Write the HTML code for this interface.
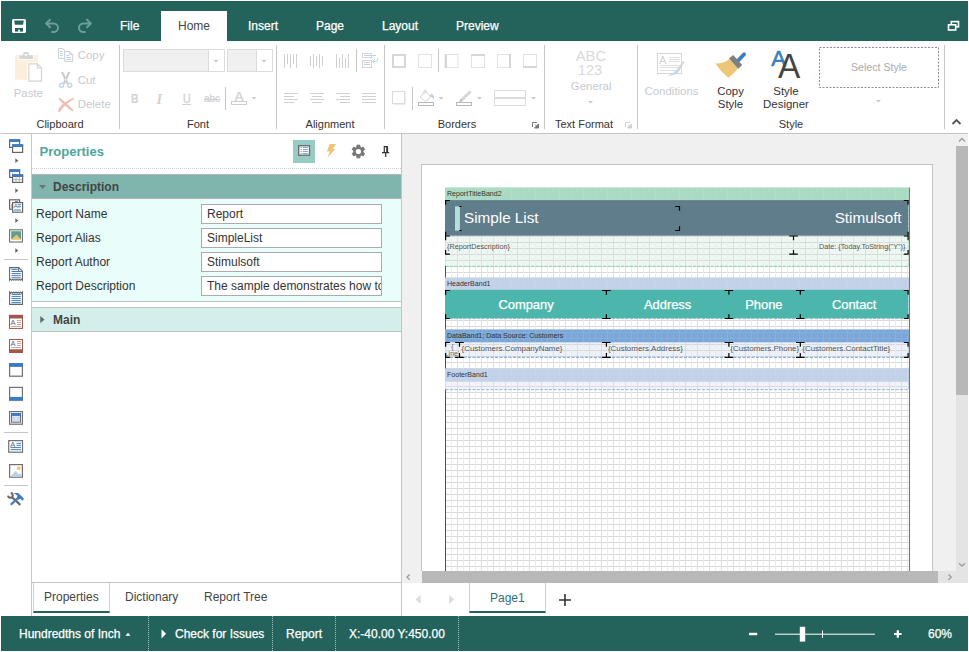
<!DOCTYPE html>
<html>
<head>
<meta charset="utf-8">
<title>Designer</title>
<style>
html,body{margin:0;padding:0;background:#fff;}
body{width:969px;height:652px;overflow:hidden;position:relative;font-family:"Liberation Sans",Arial,sans-serif;font-size:12px;color:#444;}
.a{position:absolute;}
.t{position:absolute;white-space:nowrap;line-height:14px;}
#top{left:1px;top:1px;width:967px;height:40px;background:#24635b;}
.tab{position:absolute;top:18px;-webkit-text-stroke:.25px currentColor;color:#fff;font-size:12px;line-height:14px;white-space:nowrap;}
#hometab{left:160px;top:10px;width:66px;height:30px;background:#fff;}
#ribbon{left:1px;top:41px;width:967px;height:92px;background:#fff;border-bottom:1px solid #c6c6c6;}
.vsep{position:absolute;width:1px;background:#c6c6c6;}
.gl{position:absolute;top:118px;font-size:11px;line-height:13px;color:#333;white-space:nowrap;transform:translateX(-50%);}
.dis{color:#c9c9d0;}
.s11{font-size:11.45px;line-height:13px;}
#status{left:1px;top:616px;width:967px;height:35px;background:#24635b;color:#fff;}
.st{position:absolute;top:11px;-webkit-text-stroke:.25px #fff;color:#fff;font-size:12px;line-height:14px;white-space:nowrap;}
.dsep{position:absolute;top:0;height:35px;width:0;border-left:1px dotted #9fc3be;}
svg{position:absolute;overflow:visible;}
.bh{font-size:7.050px;line-height:8px;color:#333;}
.ct{font-size:7.950px;line-height:9px;color:#555;}
.hd{top:296.500px;font-size:12.900px;line-height:15px;color:#fff;-webkit-text-stroke:.25px #fff;transform:translateX(-50%);}
.grid{background-image:linear-gradient(to right,#dedede 1px,transparent 1px),linear-gradient(to right,transparent 6px,#ececec 6px,#ececec 7px,transparent 7px),linear-gradient(to bottom,#d9d9d9 1px,transparent 1px);background-size:12px 6px,12px 6px,6px 6px;}
.inp{left:201px;width:179px;height:18px;border:1px solid #ababab;background:#fff;color:#333;font-size:12px;line-height:18px;padding-left:5px;box-sizing:content-box;width:174px;overflow:hidden;white-space:nowrap;}
</style>
</head>
<body>
<!-- TOP BAR -->
<div class="a" id="top">
  <div class="a" id="hometab"></div>
</div>
<div class="tab" style="left:120px;top:19px">File</div>
<div class="tab" style="left:178px;top:19px;color:#444;-webkit-text-stroke:0">Home</div>
<div class="tab" style="left:248px;top:19px">Insert</div>
<div class="tab" style="left:316px;top:19px">Page</div>
<div class="tab" style="left:382px;top:19px">Layout</div>
<div class="tab" style="left:456px;top:19px">Preview</div>

<!-- RIBBON -->
<div class="a" id="ribbon"></div>
<div class="vsep" style="left:119px;top:45px;height:84px"></div>
<div class="vsep" style="left:276px;top:45px;height:84px"></div>
<div class="vsep" style="left:384px;top:45px;height:84px"></div>
<div class="vsep" style="left:544px;top:45px;height:84px"></div>
<div class="vsep" style="left:637px;top:45px;height:84px"></div>
<div class="vsep" style="left:944px;top:45px;height:84px"></div>
<div class="gl" style="left:60px">Clipboard</div>
<div class="gl" style="left:198px">Font</div>
<div class="gl" style="left:330px">Alignment</div>
<div class="gl" style="left:457px">Borders</div>
<div class="gl" style="left:584px">Text Format</div>
<div class="gl" style="left:791px">Style</div>


<!-- ribbon texts -->
<div class="t s11 dis" style="left:13.700px;top:87px">Paste</div>
<div class="t s11 dis" style="left:77.700px;top:49px">Copy</div>
<div class="t s11 dis" style="left:77.700px;top:74px">Cut</div>
<div class="t s11 dis" style="left:77.700px;top:98px">Delete</div>
<div class="t s11 dis" style="left:570.800px;top:80px">General</div>
<div class="t s11 dis" style="left:644.500px;top:85px">Conditions</div>
<div class="t s11" style="left:730.500px;top:85px;color:#333;text-align:center;transform:translateX(-50%)">Copy<br>Style</div>
<div class="t s11" style="left:786px;top:85px;color:#333;text-align:center;transform:translateX(-50%)">Style<br>Designer</div>
<div class="t" style="left:851px;top:60.500px;color:#aaa;font-size:10.600px;line-height:13px">Select Style</div>
<div class="t dis" style="left:575.200px;top:48.500px;font-size:15.500px;line-height:14.200px;transform:scaleX(.95);text-align:center;width:30px;color:#d9d9d9;white-space:normal">ABC<br>123</div>
<svg width="122" height="42" viewBox="818 46 122 42" style="left:818px;top:46px"><rect x="819.500" y="47.500" width="119" height="40" fill="none" stroke="#8c8c8c" stroke-width="1" stroke-dasharray="2 1.500"/></svg>
<!-- font combos -->
<div class="a" style="left:123px;top:49px;width:100px;height:21px;border:1px solid #dcdcdc;background:#fff"><div class="a" style="left:0;top:0;width:84px;height:21px;background:#f0f0f0;border-right:1px solid #dcdcdc"></div></div>
<div class="a" style="left:227px;top:49px;width:44px;height:21px;border:1px solid #dcdcdc;background:#fff"><div class="a" style="left:0;top:0;width:28px;height:21px;background:#f0f0f0;border-right:1px solid #dcdcdc"></div></div>
<div class="t" style="left:130.500px;top:92px;font-weight:bold;font-size:13px;color:#d2d2d2;transform:scaleX(.8);transform-origin:0 0">B</div>
<div class="t" style="left:156.500px;top:92px;font-style:italic;font-family:'Liberation Serif',serif;font-weight:bold;font-size:14.500px;color:#d2d2d2">I</div>
<div class="t" style="left:183px;top:92px;font-size:13px;color:#d2d2d2;-webkit-text-stroke:.4px #d2d2d2;transform:scaleX(.82);transform-origin:0 0">U</div><div class="a" style="left:182px;top:104px;width:9px;height:1px;background:#d2d2d2"></div>
<div class="t" style="left:204px;top:92px;font-size:10px;text-decoration:line-through;color:#cfcfcf;-webkit-text-stroke:.2px #cfcfcf">abc</div>
<div class="t" style="left:234.300px;top:90px;font-size:13.400px;font-weight:bold;color:#d4d4d4">A</div>
<div class="vsep" style="left:225px;top:87px;height:23px"></div>
<div class="vsep" style="left:356px;top:49px;height:23px"></div>
<div class="vsep" style="left:438px;top:49px;height:23px"></div>
<div class="vsep" style="left:412px;top:87px;height:23px"></div>

<svg width="969" height="652" viewBox="0 0 969 652" style="left:0;top:0;pointer-events:none">
<!-- top icons -->
<g>
 <rect x="12" y="19" width="14" height="14" rx="1.5" fill="#fff"/>
 <path d="M14.2 20.5h9.6l-.7 4.3h-8.2z" fill="#24635b"/>
 <rect x="15" y="28" width="8" height="3.6" fill="#24635b"/>
 <rect x="18.2" y="29.6" width="1.7" height="2.2" fill="#fff"/>
</g>
<g fill="none" stroke="#6a9f98" stroke-width="2" stroke-linecap="round" stroke-linejoin="round">
 <path d="M50 19.8l-3.8 3.7 3.8 3.7"/><path d="M46.5 23.5h7.2a4.3 4.3 0 0 1 0 8.6h-1.6"/>
 <path d="M87 19.8l3.8 3.7-3.8 3.7"/><path d="M90.5 23.5h-7.2a4.3 4.3 0 0 0 0 8.6h1.6"/>
</g>
<g fill="none" stroke="#fff" stroke-width="1.6">
 <rect x="951.3" y="21.6" width="7.2" height="5.2"/>
 <rect x="948.5" y="24.8" width="7.2" height="5.2" fill="#24635b"/>
</g>
<!-- paste -->
<g>
 <rect x="15" y="55" width="22.800" height="24.700" fill="#fbeedb"/>
 <path d="M19.100 58.900v-3.600h4v-1.800a1.500 1.500 0 0 1 1.500-1.500h2.800a1.500 1.500 0 0 1 1.500 1.500v1.800h4v3.600z" fill="#d6d6d6" stroke="#fff" stroke-width="1.600" paint-order="stroke"/>
 <rect x="24.900" y="53.900" width="2.200" height="1.800" fill="#fff"/>
 <rect x="27" y="62.300" width="15.500" height="20" fill="#fff"/>
 <path d="M28.800 63.800h8.500l4.200 4.200v13.200h-12.700z" fill="#fff" stroke="#d4d4d4" stroke-width="1.200"/>
 <path d="M37.300 63.800v4.200h4.200" fill="none" stroke="#d4d4d4" stroke-width="1.200"/>
</g>
<!-- copy -->
<g fill="#fff" stroke="#cfcfcf" stroke-width="1">
 <path d="M58.500 48.500h4.300l2 2v7.800h-6.300z"/>
 <path d="M64.700 51.500h5l3 3v7h-8z"/>
 <path d="M69.700 51.500v3h3" fill="none"/>
</g>
<g stroke="#bcd2ec" stroke-width="1"><path d="M60 51.500h2.700M60 53.500h2.700M60 55.500h2.700M66.300 55.500h3M66.300 57.500h4.800M66.300 59.500h4.800" fill="none"/></g>
<!-- cut -->
<path d="M61.300 72.200l1.600-.2 5.300 11-1.300 1.200zM70 72.200l-1.600-.2-5.300 11 1.300 1.200z" fill="#c9c9c9" stroke="#c9c9c9" stroke-width=".5"/>
<g fill="none" stroke="#c3d7ef" stroke-width="1.500"><circle cx="61.600" cy="85.300" r="2"/><circle cx="69.700" cy="85.300" r="2"/></g>
<!-- delete -->
<path d="M59.300 98.600c3.600 2.200 9.400 7.600 13.400 12-5-3.400-10.400-8-13.400-12zM73 98.800c-4.600 2.500-10.800 7.600-13.800 12.800-.4-1-.2-1.800.4-2.800 3-4 8.800-8 13.400-10z" fill="#f2bdb4" stroke="#f2bdb4" stroke-width="1.5" stroke-linejoin="round"/>
<!-- combo arrows -->
<g fill="#c8c8c8"><path d="M213.500 60h5l-2.500 2.600z"/><path d="M261.500 60h5l-2.500 2.600z"/><path d="M251.500 97h5l-2.500 2.600z"/>
<path d="M438.500 97h5l-2.500 2.600z"/><path d="M477 97h5l-2.500 2.600z"/><path d="M531 97h5l-2.500 2.600z"/><path d="M588 101h5l-2.500 2.600z"/><path d="M876 100h5l-2.500 2.600z"/></g>
<rect x="231.500" y="101.500" width="15" height="3" fill="#fff" stroke="#cfcfcf"/>
<!-- alignment -->
<g stroke="#d0d0d0" stroke-width="1"><line x1="284.5" y1="54" x2="284.5" y2="68"/><line x1="287.5" y1="54" x2="287.5" y2="64"/><line x1="290.5" y1="54" x2="290.5" y2="68"/><line x1="293.5" y1="54" x2="293.5" y2="64"/><line x1="296.5" y1="54" x2="296.5" y2="68"/><line x1="310.5" y1="56.0" x2="310.5" y2="66.0"/><line x1="313.5" y1="54.0" x2="313.5" y2="68.0"/><line x1="316.5" y1="56.0" x2="316.5" y2="66.0"/><line x1="319.5" y1="54.0" x2="319.5" y2="68.0"/><line x1="322.5" y1="56.0" x2="322.5" y2="66.0"/><line x1="336.5" y1="54" x2="336.5" y2="68"/><line x1="339.5" y1="58" x2="339.5" y2="68"/><line x1="342.5" y1="54" x2="342.5" y2="68"/><line x1="345.5" y1="58" x2="345.5" y2="68"/><line x1="348.5" y1="54" x2="348.5" y2="68"/><line x1="284" y1="93.5" x2="298" y2="93.5"/><line x1="284" y1="96.5" x2="294" y2="96.5"/><line x1="284" y1="99.5" x2="298" y2="99.5"/><line x1="284" y1="102.5" x2="294" y2="102.5"/><line x1="310.0" y1="93.5" x2="324.0" y2="93.5"/><line x1="312.0" y1="96.5" x2="322.0" y2="96.5"/><line x1="310.0" y1="99.5" x2="324.0" y2="99.5"/><line x1="312.0" y1="102.5" x2="322.0" y2="102.5"/><line x1="336" y1="93.5" x2="350" y2="93.5"/><line x1="340" y1="96.5" x2="350" y2="96.5"/><line x1="336" y1="99.5" x2="350" y2="99.5"/><line x1="340" y1="102.5" x2="350" y2="102.5"/><line x1="362" y1="93.5" x2="376" y2="93.5"/><line x1="362" y1="96.5" x2="376" y2="96.5"/><line x1="362" y1="99.5" x2="376" y2="99.5"/><line x1="362" y1="102.5" x2="376" y2="102.5"/></g>
<g fill="none" stroke="#d4d4d4" stroke-width="1"><rect x="362.500" y="53.500" width="9" height="4"/><rect x="362.500" y="60.500" width="9" height="7"/></g>
<g fill="none" stroke="#bcd2ec" stroke-width="1"><path d="M364 55.500h12M364 62.500h6M364 64.500h6"/><path d="M377.500 58v1.500a2 2 0 0 1 -2 2h-3m2.300-2.300l-2.300 2.300 2.300 2.300"/></g>
<!-- borders -->
<g fill="none" stroke="#d6d6d6">
 <rect x="393" y="55" width="12" height="12" stroke-width="2"/>
 <rect x="418.500" y="54.500" width="13" height="13" stroke="#e2e2e2"/>
 <rect x="445" y="54.500" width="13" height="13" stroke="#e2e2e2"/><line x1="446" y1="54" x2="446" y2="68" stroke-width="2"/>
 <rect x="471.500" y="54.500" width="13" height="13" stroke="#e2e2e2"/><line x1="471" y1="55" x2="485" y2="55" stroke-width="2"/>
 <rect x="497.500" y="54.500" width="13" height="13" stroke="#e2e2e2"/><line x1="510" y1="54" x2="510" y2="68" stroke-width="2"/>
 <rect x="523.500" y="54.500" width="13" height="13" stroke="#e2e2e2"/><line x1="523" y1="67" x2="537" y2="67" stroke-width="2"/>
 <rect x="392.500" y="91.500" width="12" height="12" stroke="#dcdcdc"/><path d="M393.500 104.500h12v-12" stroke="#ececec"/>
</g>
<!-- fill -->
<g fill="none" stroke="#b8b8b8"><rect x="418.500" y="102.500" width="15" height="3"/></g>
<g fill="none" stroke="#d2d2d2"><path d="M420.300 96.800l5.200-5.200 5.200 5.200-5.200 4.800z"/><path d="M424 94.500v-3.200a1.200 1.200 0 0 1 2.400 0v2"/></g>
<path d="M431.200 93.500c2.600 1.200 3.300 3.600 2.300 6.300-.6-1.600-1.800-3-3.600-3.800z" fill="#bcd2ec"/>
<!-- pen -->
<g fill="none" stroke="#b8b8b8"><rect x="456.500" y="102.500" width="15" height="3"/></g>
<path d="M459 102l1.800-3.200 8.700-8.300 2 2.100-8.700 8.300z" fill="#d6d6d6"/><path d="M459 102l1.800-3.200 2 2.100z" fill="#bdbdbd"/>
<!-- border style -->
<g fill="none" stroke="#dcdcdc"><rect x="494.500" y="90.500" width="31" height="15"/><line x1="495" y1="98" x2="525" y2="98" stroke-width="2"/></g>
<!-- expand icons -->
<g fill="none" stroke="#777" stroke-width="1"><path d="M532.500 127v-4.500h4.500"/></g><path d="M538.500 124v4h-4zM535 124.500l3 3" fill="#777" stroke="#777" stroke-width="1"/>
<g fill="none" stroke="#d0d0d0" stroke-width="1"><path d="M625.500 127v-4.500h4.500"/></g><path d="M631.500 124v4h-4zM628 124.500l3 3" fill="#d0d0d0" stroke="#d0d0d0" stroke-width="1"/>
<!-- conditions -->
<g fill="none" stroke="#d6d6d6"><rect x="657.500" y="53.500" width="24" height="20" fill="#fff"/><path d="M669 57.500h10.500M669 59.500h10.500M669 61.500h10.500M660 65.500h19.500M660 67.500h19.500M660 70.500h19.500" stroke="#dedede"/></g>
<path d="M683.200 61l1.300 1-5.300 8.800-2.200-1.500z" fill="#d4d4d4"/><path d="M677 69.300l2.200 1.500c-.8 3.200-6.200 4.800-12.200 5.200 4.400-1.300 7.200-3.500 10-6.700z" fill="#c4d8ee"/>
<!-- brush -->
<path d="M715.500 63.500c6 0 10-1.500 14-4.500l8.500 9.500c-3 3.500-6.500 7-9.500 9.200c-4-3-9.500-8.700-13-14.200z" fill="#edc678"/>
<path d="M729 58.500l4.200-3.500 9 10-4 3.800z" fill="#7f7f7f"/>
<path d="M736.600 59.600l6.200-6.600a1.800 1.800 0 0 1 2.700 2.500l-6.200 6.600z" fill="#3b7dc0"/>
<!-- chevron up -->
<path d="M952.500 124l4-4 4 4" fill="none" stroke="#555" stroke-width="1.800"/>
</svg>
<div class="t" style="left:771.300px;top:48px;font-size:22px;line-height:22px;color:#3b7cc0;font-weight:normal;-webkit-text-stroke:.6px #3b7cc0">A</div>
<div class="t" style="left:778.300px;top:49px;font-size:35.500px;line-height:35px;color:#444;transform:scaleX(.94);transform-origin:0 0">A</div>
<div class="t" style="left:659.300px;top:55px;font-size:10.500px;line-height:10px;color:#cfcfcf">A</div>

<!-- MAIN -->
<div class="a" id="main" style="left:1px;top:134px;width:967px;height:482px;background:#fff"></div>


<!-- LEFT TOOLBAR -->
<div class="a" style="left:31px;top:134px;width:1px;height:482px;background:#c6c6c6"></div>
<div class="a" style="left:4px;top:259px;width:24px;height:1px;background:#c6c6c6"></div>
<div class="a" style="left:4px;top:432px;width:24px;height:1px;background:#c6c6c6"></div>
<div class="a" style="left:4px;top:485px;width:24px;height:1px;background:#c6c6c6"></div>
<svg width="32" height="652" viewBox="0 0 32 652" style="left:0;top:0">
<!-- 1 windows -->
<g fill="#fff" stroke="#666" stroke-width="1.200">
<rect x="9.600" y="140" width="10" height="7.400"/><rect x="9" y="139.200" width="11.200" height="2.800" fill="#3d7cc0" stroke="none"/>
<rect x="12.600" y="145" width="10" height="7.400"/><rect x="12" y="144.200" width="11.200" height="2.800" fill="#3d7cc0" stroke="none"/>
</g>
<path d="M15.300 158.29999999999998l3 2.400-3 2.400z" fill="#666"/>
<!-- 2 tables -->
<g fill="#fff" stroke="#666" stroke-width="1.200">
<rect x="9.600" y="170" width="10" height="7.400"/><rect x="9" y="169.200" width="11.200" height="2.800" fill="#3d7cc0" stroke="none"/>
<rect x="12.600" y="175" width="10" height="7.400"/><rect x="12" y="174.200" width="11.200" height="2.800" fill="#3d7cc0" stroke="none"/>
</g>
<g stroke="#b0b0b0" stroke-width="1"><line x1="13" y1="179.700" x2="22" y2="179.700"/><line x1="16" y1="177.200" x2="16" y2="182"/><line x1="19.300" y1="177.200" x2="19.300" y2="182"/><line x1="12.400" y1="172.500" x2="12.400" y2="174"/></g>
<path d="M15.300 188.2l3 2.400-3 2.400z" fill="#666"/>
<!-- 3 docs -->
<g fill="#fff" stroke="#666" stroke-width="1.200"><rect x="9.600" y="199.800" width="10" height="9.400"/><rect x="12.600" y="202.600" width="10" height="9.600"/></g>
<g stroke="#3d7cc0" stroke-width="1"><line x1="17.700" y1="204.800" x2="21" y2="204.800"/><line x1="17.700" y1="206.800" x2="21" y2="206.800"/><line x1="14" y1="210" x2="21" y2="210"/><line x1="15" y1="201.300" x2="18" y2="201.300"/><line x1="11" y1="205" x2="12" y2="205"/><line x1="11" y1="207" x2="12" y2="207"/></g>
<path d="M15.300 218.2l3 2.400-3 2.400z" fill="#666"/>
<!-- 4 picture -->
<rect x="9.600" y="229.800" width="12.800" height="12.200" fill="#fff" stroke="#6e6e6e" stroke-width="1.100"/>
<rect x="11.200" y="231.200" width="9.800" height="8" fill="#5f9e8d"/><path d="M11.200 239.800l5.200-5.400 5 5.400z" fill="#ecc474"/>
<path d="M15.300 248.2l3 2.400-3 2.400z" fill="#666"/>
<!-- 5 report title -->
<path d="M9.600 280.300v-12.700h9.200l3.600 3.600v9.100l-1.070-1.100-1.070 1.100-1.070-1.100-1.070 1.100-1.070-1.100-1.070 1.100-1.070-1.100-1.070 1.100-1.070-1.100-1.070 1.100-1.070-1.100z" fill="#fff" stroke="#666" stroke-width="1.100"/><path d="M18.600 267.600v3.800h3.800" fill="none" stroke="#666" stroke-width="1"/>
<line x1="11.5" y1="269.4" x2="17.5" y2="269.4" stroke="#3d7cc0" stroke-width="1"/><line x1="11.5" y1="271.5" x2="20.8" y2="271.5" stroke="#3d7cc0" stroke-width="1"/><line x1="11.5" y1="273.6" x2="20.8" y2="273.6" stroke="#3d7cc0" stroke-width="1"/><line x1="11.5" y1="275.7" x2="20.8" y2="275.7" stroke="#3d7cc0" stroke-width="1"/><line x1="11.5" y1="277.8" x2="20.8" y2="277.8" stroke="#3d7cc0" stroke-width="1"/>
<!-- 6 report summary -->
<path d="M9.600 292l1.070 1.100 1.070-1.100 1.070 1.100 1.070-1.100 1.070 1.100 1.070-1.100 1.070 1.100 1.070-1.100 1.070 1.100 1.070-1.100 1.070 1.100 1.070-1.100v12.400h-12.800z" fill="#fff" stroke="#666" stroke-width="1.100"/>
<line x1="11.5" y1="294.6" x2="20.8" y2="294.6" stroke="#3d7cc0" stroke-width="1"/><line x1="11.5" y1="296.6" x2="20.8" y2="296.6" stroke="#3d7cc0" stroke-width="1"/><line x1="11.5" y1="298.6" x2="20.8" y2="298.6" stroke="#3d7cc0" stroke-width="1"/><line x1="11.5" y1="300.6" x2="20.8" y2="300.6" stroke="#3d7cc0" stroke-width="1"/><line x1="11.5" y1="302.6" x2="20.8" y2="302.6" stroke="#3d7cc0" stroke-width="1"/>
<!-- 7 page header -->
<rect x="9.500" y="315.400" width="13" height="13" fill="#fff" stroke="#a0584a" stroke-width="1"/><rect x="9" y="314.900" width="14" height="3.600" fill="#a0584a"/>
<line x1="17" y1="320.5" x2="21" y2="320.5" stroke="#d4a8a0" stroke-width="1"/><line x1="17" y1="322.5" x2="21" y2="322.5" stroke="#d4a8a0" stroke-width="1"/><line x1="17" y1="324.5" x2="21" y2="324.5" stroke="#d4a8a0" stroke-width="1"/><line x1="11" y1="326.5" x2="21" y2="326.5" stroke="#d4a8a0" stroke-width="1"/>
<!-- 8 page footer -->
<rect x="9.500" y="339.500" width="13" height="13" fill="#fff" stroke="#a0584a" stroke-width="1"/><rect x="9" y="349.300" width="14" height="3.700" fill="#a0584a"/>
<line x1="17" y1="341.5" x2="21" y2="341.5" stroke="#d4a8a0" stroke-width="1"/><line x1="17" y1="343.5" x2="21" y2="343.5" stroke="#d4a8a0" stroke-width="1"/><line x1="17" y1="345.5" x2="21" y2="345.5" stroke="#d4a8a0" stroke-width="1"/><line x1="11" y1="347.5" x2="21" y2="347.5" stroke="#d4a8a0" stroke-width="1"/>
<!-- 9 header band -->
<rect x="9.600" y="363.600" width="12.800" height="12.600" fill="#fff" stroke="#707070" stroke-width="1.200"/><rect x="9" y="363" width="14" height="3.900" fill="#3d7cc0"/>
<!-- 10 footer band -->
<rect x="9.600" y="387.400" width="12.800" height="12.600" fill="#fff" stroke="#707070" stroke-width="1.200"/><rect x="9" y="396.900" width="14" height="3.800" fill="#3d7cc0"/>
<!-- 11 data band -->
<rect x="9.600" y="411.600" width="12.800" height="12.600" fill="#fff" stroke="#707070" stroke-width="1.200"/><rect x="11.600" y="413.600" width="8.800" height="8.600" fill="#dfeaf7" stroke="#666" stroke-width="1"/><rect x="11.100" y="413.100" width="9.800" height="2.800" fill="#3d7cc0"/>
<g stroke="#a9c4e4" stroke-width="1"><line x1="13" y1="417.700" x2="15.300" y2="417.700"/><line x1="16.700" y1="417.700" x2="19" y2="417.700"/><line x1="13" y1="419.900" x2="15.300" y2="419.900"/><line x1="16.700" y1="419.900" x2="19" y2="419.900"/></g>
<!-- 12 text -->
<rect x="8.700" y="440.600" width="13.800" height="11.600" fill="#fff" stroke="#707070" stroke-width="1.200"/>
<line x1="16.5" y1="443.3" x2="21" y2="443.3" stroke="#3d7cc0" stroke-width="1"/><line x1="16.5" y1="445.3" x2="21" y2="445.3" stroke="#3d7cc0" stroke-width="1"/><line x1="10.5" y1="447.6" x2="21" y2="447.6" stroke="#3d7cc0" stroke-width="1"/><line x1="10.5" y1="449.7" x2="21" y2="449.7" stroke="#3d7cc0" stroke-width="1"/>
<!-- 13 image -->
<rect x="9.600" y="464.600" width="12.800" height="12.600" fill="#fff" stroke="#707070" stroke-width="1.200"/>
<circle cx="18.800" cy="468.200" r="1.900" fill="#f0c878"/><path d="M10.600 476.400l4.900-5.400 3.300 3.600 1.200-1.400 1.600 1.900v1.300z" fill="#b9d0e8"/>
<!-- 14 tools -->
<g fill="none"><path d="M12 497.300l8.300 7.600" stroke="#666" stroke-width="2.200"/><path d="M10.700 493a2.400 2.400 0 1 1 -2.700 2.700" stroke="#666" stroke-width="1.900"/><path d="M10.800 504.800l6.800-6.500" stroke="#3d7cc0" stroke-width="2.200"/></g>
<path d="M14.200 493h3.800l4 3.600 2 2.300-1.600 1.900-2-2-1.700.9-1.900-1.100.6-3.100-3.200-1.900z" fill="#3d7cc0"/>
</svg>
<div class="t" style="left:10.500px;top:318.500px;font-size:7.500px;line-height:8px;color:#666">A</div>
<div class="t" style="left:10.500px;top:340px;font-size:7.500px;line-height:8px;color:#666">A</div>
<div class="t" style="left:10.300px;top:440.500px;font-size:7.500px;line-height:8px;color:#666">A</div>
<div class="t" style="left:13.800px;top:203.300px;font-size:6px;line-height:7px;color:#555">A</div>

<!-- PROPERTIES PANEL -->
<div class="a" style="left:401px;top:134px;width:1px;height:482px;background:#c6c6c6"></div>
<div class="t" style="left:39.600px;top:144px;font-size:13px;line-height:15px;font-weight:bold;color:#4ea69c">Properties</div>
<div class="a" style="left:293px;top:140px;width:22px;height:23px;background:#96ccc4"></div>
<svg width="120" height="30" viewBox="290 138 120 30" style="left:290px;top:138px">
<rect x="298.700" y="145.700" width="10.800" height="9.500" fill="#fff" stroke="#6e6e6e" stroke-width="1.400"/>
<g stroke="#7ea6d6" stroke-width="1"><path d="M300.500 147.500h1.200M302.800 147.500h5M300.500 149.500h1.200M302.800 149.500h5M300.500 151.500h1.200M302.800 151.500h5M300.500 153.500h1.200M302.800 153.500h5"/></g>
<path d="M329.700 144h6.300l-3.400 5.100h2.800l-8.200 8.900 2.800-6.600h-3.100z" fill="#ecc474"/>
<path d="M356.87 147.06L356.94 145.17L359.86 145.17L359.93 147.06L361.48 147.95L363.15 147.07L364.62 149.60L363.01 150.60L363.01 152.40L364.62 153.40L363.15 155.93L361.48 155.05L359.93 155.94L359.86 157.83L356.94 157.83L356.87 155.94L355.32 155.05L353.65 155.93L352.18 153.40L353.79 152.40L353.79 150.60L352.18 149.60L353.65 147.07L355.32 147.95Z" fill="#787878" stroke="#787878" stroke-width="1" stroke-linejoin="round"/><circle cx="358.4" cy="151.5" r="2.600" fill="#fff"/>
<g fill="none" stroke="#333" stroke-width="1.200"><path d="M384.300 152.500v-5.800h3v5.800M382 152.600h7.200M385.700 152.600v4.300"/><path d="M387.200 146.700v5.800" stroke-width="1.800"/></g>
</svg>
<div class="a" style="left:32px;top:168px;width:369px;height:0;border-top:1px dotted #d0d0d0"></div>
<div class="a" style="left:32px;top:174px;width:369px;height:23px;background:#7fb5ad;border-top:1px solid #b4b4b4;border-bottom:1px solid #b4b4b4"></div>
<div class="a" style="left:32px;top:199px;width:369px;height:102px;background:#e9fdfb;border-bottom:1px solid #c0c0c0"></div>
<div class="a" style="left:32px;top:307px;width:369px;height:23px;background:#d4efeb;border-top:1px solid #c0c0c0;border-bottom:1px solid #c0c0c0"></div>
<svg width="20" height="160" viewBox="36 180 20 160" style="left:36px;top:180px"><path d="M39 185h7l-3.500 3.900z" fill="#707070"/><path d="M40.300 316l4.200 3.600-4.200 3.600z" fill="#666"/></svg>
<div class="t" style="left:53px;top:180px;font-weight:bold;color:#444">Description</div>
<div class="t" style="left:53px;top:313px;font-weight:bold;color:#444">Main</div>
<div class="t" style="left:36px;top:207px;color:#333">Report Name</div>
<div class="t" style="left:36px;top:231px;color:#333">Report Alias</div>
<div class="t" style="left:36px;top:255px;color:#333">Report Author</div>
<div class="t" style="left:36px;top:279px;color:#333">Report Description</div>
<div class="a inp" style="top:204px">Report</div>
<div class="a inp" style="top:228px">SimpleList</div>
<div class="a inp" style="top:252px">Stimulsoft</div>
<div class="a inp" style="top:276px">The sample demonstrates how to create a simple list report</div>
<!-- panel tabs -->
<div class="a" style="left:32px;top:582px;width:369px;height:1px;background:#c6c6c6"></div>
<div class="a" style="left:33px;top:583px;width:77px;height:28px;border-left:1px solid #d0d0d0;border-right:1px solid #d0d0d0;border-bottom:2px solid #24635b;box-sizing:border-box;height:30px"></div>
<div class="t" style="left:44px;top:590px;color:#444">Properties</div>
<div class="t" style="left:125px;top:590px;color:#444">Dictionary</div>
<div class="t" style="left:204px;top:590px;color:#444">Report Tree</div>


<div class="a" style="left:402px;top:134px;width:566px;height:449px;background:#f0f0f0;overflow:hidden">
 <div class="a" style="left:19px;top:30px;width:510px;height:440px;background:#fff;border:1px solid #c4c4c4"></div>
</div>
<div class="a" style="left:445px;top:200px;width:464px;height:66px;background:#eef8f3"></div>
<div class="a" style="left:445px;top:342px;width:464px;height:15px;background:#edf2fa"></div>
<div class="a" style="left:445px;top:382px;width:464px;height:7.500px;background:#f1f4fa"></div>
<div class="a grid" style="left:445px;top:188px;width:464px;height:383px"></div>
<svg width="567" height="437" viewBox="402 134 567 437" style="left:402px;top:134px;overflow:hidden">
<!-- band headers -->
<rect x="445" y="187.400" width="464" height="12.600" fill="#a9dbc3"/>
<rect x="445" y="277.400" width="464" height="12.700" fill="#c3d2e8"/>
<rect x="445" y="329.400" width="464" height="12.900" fill="#7aa7d8"/>
<rect x="445" y="368.400" width="464" height="13.400" fill="#c3d2e8"/>
<!-- dashed band bottoms -->
<g fill="none" stroke-width="1" stroke-dasharray="3 1.500">
<line x1="445.500" y1="266.300" x2="909" y2="266.300" stroke="#8fd0b0"/>
<line x1="445.500" y1="318.600" x2="909" y2="318.600" stroke="#a9c2e4"/>
<line x1="445.500" y1="357.300" x2="909" y2="357.300" stroke="#6f9fd8"/>
<line x1="445.500" y1="389.600" x2="909" y2="389.600" stroke="#9ab8e0"/>
<line x1="909" y1="200" x2="909" y2="266" stroke="#8fd0b0"/>
<line x1="909" y1="290" x2="909" y2="318" stroke="#a9c2e4"/>
<line x1="909" y1="342" x2="909" y2="357" stroke="#6f9fd8"/>
<line x1="909" y1="382" x2="909" y2="389" stroke="#9ab8e0"/>
</g>
<!-- margins -->
<line x1="445.500" y1="266" x2="445.500" y2="277.400" stroke="#505050" stroke-width="1"/>
<line x1="445.500" y1="318.500" x2="445.500" y2="329.400" stroke="#505050" stroke-width="1"/>
<line x1="445.500" y1="357.500" x2="445.500" y2="368.400" stroke="#505050" stroke-width="1"/>
<line x1="445.500" y1="389.500" x2="445.500" y2="571" stroke="#505050" stroke-width="1"/>
<line x1="909.500" y1="187.400" x2="909.500" y2="571" stroke="#787878" stroke-width="1.100"/>
<!-- components -->
<rect x="445" y="200.100" width="463.300" height="35.600" fill="#607d8b"/>
<rect x="455" y="206.400" width="4.900" height="24.300" fill="#b2dfdb"/>
<rect x="445" y="289.800" width="463.300" height="28.500" fill="#4db6ac"/>
<path d="M445.6 204.8V200.5H449.90000000000003M445.6 231.7V236.0H449.90000000000003M908.1 204.8V200.5H903.8000000000001M908.1 231.7V236.0H903.8000000000001M459.3 206.5H461.6M459.3 230.5H461.6M679.5 210.8V206.5H675.2M679.5 226.2V230.5H675.2M445.6 240.3V236.0H449.90000000000003M445.6 249.89999999999998V254.2H449.90000000000003M789.2 236.0H797.8M793.5 236.0V240.3M789.2 254.2H797.8M793.5 254.2V249.89999999999998M908.1 240.3V236.0H903.8000000000001M908.1 249.89999999999998V254.2H903.8000000000001M445.6 294.8V290.5H449.90000000000003M445.6 314.2V318.5H449.90000000000003M908.1 294.8V290.5H903.8000000000001M908.1 314.2V318.5H903.8000000000001M602.1 290.5H610.6999999999999M606.4 290.5V294.8M602.1 318.5H610.6999999999999M606.4 318.5V314.2M724.6 290.5H733.1999999999999M728.9 290.5V294.8M724.6 318.5H733.1999999999999M728.9 318.5V314.2M796.0 290.5H804.5999999999999M800.3 290.5V294.8M796.0 318.5H804.5999999999999M800.3 318.5V314.2M445.6 346.8V342.5H449.90000000000003M445.6 353.09999999999997V357.4H449.90000000000003M908.1 346.8V342.5H903.8000000000001M908.1 353.09999999999997V357.4H903.8000000000001M455.2 342.5H463.8M459.5 342.5V346.8M455.2 357.4H463.8M459.5 357.4V353.09999999999997M602.1 342.5H610.6999999999999M606.4 342.5V346.8M602.1 357.4H610.6999999999999M606.4 357.4V353.09999999999997M724.6 342.5H733.1999999999999M728.9 342.5V346.8M724.6 357.4H733.1999999999999M728.9 357.4V353.09999999999997M796.0 342.5H804.5999999999999M800.3 342.5V346.8M796.0 357.4H804.5999999999999M800.3 357.4V353.09999999999997" fill="none" stroke="#000" stroke-width="1.200"/>
</svg>
<div class="a grid" style="left:445px;top:188px;width:464px;height:12px;opacity:.14"></div>
<div class="a grid" style="left:445px;top:278px;width:464px;height:12px;opacity:.14"></div>
<div class="a grid" style="left:445px;top:330px;width:464px;height:12px;opacity:.14;background-position:0 2px"></div>
<div class="a grid" style="left:445px;top:369px;width:464px;height:12.500px;opacity:.14;background-position:0 -1px"></div>
<div class="t bh" style="left:447px;top:189.500px">ReportTitleBand2</div>
<div class="t bh" style="left:447px;top:279.600px">HeaderBand1</div>
<div class="t bh" style="left:447px;top:331.700px">DataBand1; Data Source: Customers</div>
<div class="t bh" style="left:447px;top:370.800px">FooterBand1</div>
<div class="t" style="left:464px;top:209px;font-size:15.250px;line-height:17px;color:#fff">Simple List</div>
<div class="t" style="right:67.400px;top:209px;font-size:15.250px;line-height:17px;color:#fff">Stimulsoft</div>
<div class="t ct" style="left:447px;top:242px;font-size:7.250px">{ReportDescription}</div>
<div class="t ct" style="right:63.600px;top:242px;font-size:7.250px">Date: {Today.ToString("Y")}</div>
<div class="t hd" style="left:526px">Company</div>
<div class="t hd" style="left:667.600px">Address</div>
<div class="t hd" style="left:763.900px">Phone</div>
<div class="t hd" style="left:854.200px">Contact</div>
<div class="t ct" style="left:461.500px;top:344.300px">{Customers.CompanyName}</div>
<div class="t ct" style="left:607.900px;top:344.300px">{Customers.Address}</div>
<div class="t ct" style="left:730.300px;top:344.300px">{Customers.Phone}</div>
<div class="t ct" style="left:802.300px;top:344.300px">{Customers.ContactTitle}</div>
<div class="a ct" style="left:446px;top:343px;width:13px;height:14.500px;overflow:hidden;font-size:7px;line-height:8px;color:#666"><div class="t" style="left:50%;top:-.5px;transform:translateX(-50%);line-height:8px">{</div><div class="t" style="left:50%;top:7px;transform:translateX(-50%);line-height:8px">Line}</div></div>
<!-- scrollbars -->
<div class="a" style="left:956px;top:134px;width:12px;height:437px;background:#f0f0f0"></div>
<div class="a" style="left:956px;top:146px;width:12px;height:249px;background:#b8b8b8"></div>
<div class="a" style="left:956px;top:395px;width:12px;height:176px;background:#e4e4e4"></div>
<div class="a" style="left:402px;top:571px;width:566px;height:12px;background:#e4e4e4"></div>
<div class="a" style="left:402px;top:571px;width:20px;height:12px;background:#f0f0f0"></div>
<div class="a" style="left:422px;top:571px;width:516px;height:12px;background:#b8b8b8"></div>
<svg width="567" height="450" viewBox="402 134 567 450" style="left:402px;top:134px"><g fill="none" stroke="#9a9a9a" stroke-width="1.300"><path d="M959 141.500l3-3 3 3"/><path d="M959 563.200l3 3 3-3"/><path d="M948.500 574.500l2.700 2.600-2.700 2.600"/><path d="M409.700 574.500l-2.700 2.600 2.700 2.600"/></g></svg>
<!-- page tabs -->
<div class="a" style="left:402px;top:583px;width:566px;height:33px;background:#fff"></div>
<div class="a" style="left:469px;top:583px;width:77px;height:30px;box-sizing:border-box;border-left:1px solid #d0d0d0;border-right:1px solid #d0d0d0;border-bottom:2px solid #24635b"></div>
<div class="t" style="left:490px;top:591px;color:#2f6f7f">Page1</div>
<svg width="180" height="30" viewBox="410 585 180 30" style="left:410px;top:585px"><path d="M420.600 595.100v9l-5-4.500z" fill="#dcdcdc"/><path d="M449.200 595.100v9l5-4.500z" fill="#dcdcdc"/><path d="M559 600h12M565 594v12" stroke="#333" stroke-width="1.600" fill="none"/></svg>

<!-- STATUS -->
<div class="a" id="status">
  <svg width="967" height="35" viewBox="1 616 967 35" style="left:0;top:0">
<path d="M125.400 635.800h5.200l-2.600-3z" fill="#fff"/>
<path d="M161.500 629.200v9.200l4.600-4.600z" fill="#fff"/>
<rect x="749" y="632.800" width="8.200" height="2.400" fill="#fff"/>
<rect x="775" y="633.700" width="100" height="1" fill="#fff"/>
<rect x="799.800" y="626.800" width="5.400" height="14.800" fill="#fff"/>
<rect x="822" y="630.500" width="1" height="7.400" fill="#fff"/>
<path d="M894 634h7.600M897.800 630.200v7.600" stroke="#fff" stroke-width="2.200" fill="none"/>
</svg>
  <div class="st" style="left:18px">Hundredths of Inch</div>
  <div class="dsep" style="left:147px"></div>
  <div class="st" style="left:174px">Check for Issues</div>
  <div class="dsep" style="left:271px"></div>
  <div class="st" style="left:285px">Report</div>
  <div class="dsep" style="left:334px"></div>
  <div class="st" style="left:348px">X:-40.00 Y:450.00</div>
  <div class="dsep" style="left:457px"></div>
  <div class="st" style="left:927px">60%</div>
</div>
</body>
</html>
